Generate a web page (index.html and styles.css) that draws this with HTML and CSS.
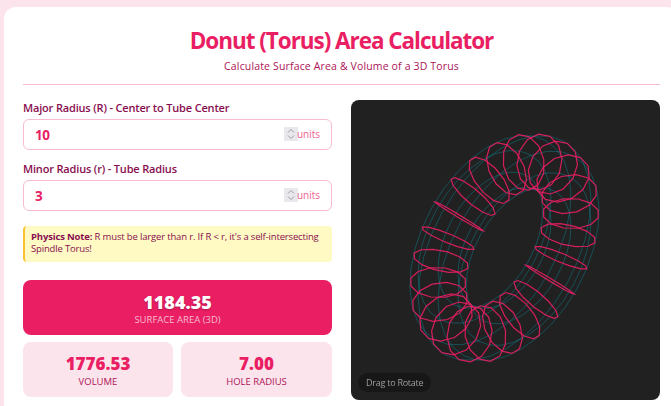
FILE: index.html
```html
<!DOCTYPE html>
<html lang="en">
<head>
<meta charset="utf-8">
<title>Donut (Torus) Area Calculator</title>
<link rel="stylesheet" href="styles.css">
</head>
<body>
<main class="card">
  <header class="header">
    <h1 class="title">Donut (Torus) Area Calculator</h1>
    <p class="subtitle">Calculate Surface Area &amp; Volume of a 3D Torus</p>
  </header>
  <div class="layout">
    <section class="controls">
      <div class="field">
        <label class="label" for="major">Major Radius (R) - Center to Tube Center</label>
        <div class="input-wrap">
          <input class="input" id="major" type="number" value="10">
          <svg class="spin" viewBox="0 0 14 14" aria-hidden="true"><path d="M4 5.500 7 2.500 10 5.500M4 8.500 7 11.500 10 8.500"/></svg>
          <span class="unit">units</span>
        </div>
      </div>
      <div class="field">
        <label class="label" for="minor">Minor Radius (r) - Tube Radius</label>
        <div class="input-wrap">
          <input class="input" id="minor" type="number" value="3">
          <svg class="spin" viewBox="0 0 14 14" aria-hidden="true"><path d="M4 5.500 7 2.500 10 5.500M4 8.500 7 11.500 10 8.500"/></svg>
          <span class="unit">units</span>
        </div>
      </div>
      <p class="note"><strong>Physics Note:</strong> R must be larger than r. If R &lt; r, it's a self-intersecting Spindle Torus!</p>
      <div class="result-main">
        <div class="main-value">1184.35</div>
        <div class="main-label">SURFACE AREA (3D)</div>
      </div>
      <div class="result-grid">
        <div class="result-small">
          <div class="small-value">1776.53</div>
          <div class="small-label">VOLUME</div>
        </div>
        <div class="result-small">
          <div class="small-value">7.00</div>
          <div class="small-label">HOLE RADIUS</div>
        </div>
      </div>
    </section>
    <section class="viewer">
      <canvas class="canvas" id="torus" width="309" height="300"></canvas>
      <span class="hint">Drag to Rotate</span>
    </section>
  </div>
</main>
<script src="torus.js"></script>
</body>
</html>
```
FILE: styles.css
```css
* { box-sizing: border-box; }
html, body { margin: 0; height: 100%; overflow: hidden; }
body {
  background: #fce4ec;
  padding: 7px 0 0 4px;
  font-family: "Open Sans", "Noto Sans", sans-serif;
  color: #880e4f;
}
.card {
  width: 675px;
  height: 420px;
  background: #fff;
  border-radius: 12px;
  padding: 19px;
}
.header {
  height: 59px;
  border-bottom: 1px solid #f8bbd0;
  text-align: center;
}
.title {
  margin: 0;
  font-size: 22.5px;
  line-height: 30px;
  font-weight: 700;
  letter-spacing: -1.05px;
  color: #e91e63;
}
.subtitle {
  margin: 3px 0 0;
  font-size: 10.5px;
  line-height: 15px;
  letter-spacing: .15px;
  color: #ad1457;
}
.layout {
  display: grid;
  grid-template-columns: 309px 309px;
  gap: 19px;
  margin-top: 15px;
}
.controls { display: flex; flex-direction: column; }
.field { margin-bottom: 11px; }
.label {
  display: block;
  font-size: 11px;
  line-height: 15px;
  font-weight: 600;
  letter-spacing: -.17px;
  margin-bottom: 4px;
}
.input-wrap { position: relative; }
.input {
  display: block;
  width: 100%;
  height: 31px;
  border: 1px solid #f8bbd0;
  border-radius: 6px;
  padding: 0 50px 0 11px;
  font-family: inherit;
  font-size: 13.5px;
  font-weight: 700;
  letter-spacing: -.4px;
  color: #e91e63;
  background: #fff;
  outline: none;
  appearance: textfield;
}
.input::-webkit-inner-spin-button { display: none; }
.spin {
  position: absolute;
  right: 34px;
  top: 8px;
  width: 14px;
  height: 14px;
  background: #e9e9ed;
}
.spin path { fill: none; stroke: #9a9aa2; stroke-width: 1; }
.unit {
  position: absolute;
  right: 12px;
  top: 8px;
  font-size: 10px;
  line-height: 14px;
  color: #f06292;
}
.note {
  margin: 4px 0 0;
  height: 36px;
  padding: 5px 4px 0 6px;
  background: #fff9c4;
  border-left: 2px solid #fbc02d;
  border-radius: 4px;
  font-size: 9.500px;
  line-height: 12px;
  letter-spacing: -.16px;
}
.result-main {
  margin-top: 18px;
  height: 55px;
  background: #e91e63;
  border-radius: 8px;
  text-align: center;
  color: #fff;
  padding-top: 11px;
}
.main-value {
  font-size: 18px;
  line-height: 22px;
  font-weight: 800;
  text-shadow: 0 1px 2px rgba(0, 0, 0, .25);
}
.main-label {
  font-size: 9.500px;
  line-height: 14px;
  color: #f8bbd0;
}
.result-grid {
  display: grid;
  grid-template-columns: 150px 151px;
  gap: 8px;
  margin-top: 7px;
}
.result-small {
  height: 55px;
  background: #fce4ec;
  border-radius: 8px;
  text-align: center;
  padding-top: 11px;
}
.small-value {
  font-size: 17px;
  line-height: 22px;
  font-weight: 800;
  color: #e91e63;
}
.small-label {
  font-size: 9.500px;
  line-height: 14px;
  color: #ad1457;
}
.viewer {
  position: relative;
  height: 300px;
  background: #212121;
  border-radius: 8px;
  overflow: hidden;
}
.canvas { display: block; }
.hint {
  position: absolute;
  left: 7px;
  bottom: 8px;
  height: 19px;
  padding: 0 8px;
  border-radius: 10px;
  background: rgba(0, 0, 0, .3);
  font-size: 9px;
  line-height: 19px;
  letter-spacing: -.25px;
  color: #9e9e9e;
}
```
FILE: torus.js
```js
(function () {
  var canvas = document.getElementById('torus');
  var ctx = canvas.getContext('2d');
  var R = 10, r = 3, scale = 9.4, cx = 153.5, cy = 148;
  var tilt = 54 * Math.PI / 180, roll = 119 * Math.PI / 180;
  var rings = 24, segs = 12, tubes = 8, steps = 32;

  function project(u, v) {
    var d = R + r * Math.cos(v);
    var x = d * Math.cos(u), y = d * Math.sin(u), z = r * Math.sin(v);
    var y2 = y * Math.cos(tilt) - z * Math.sin(tilt);
    var sx = x * Math.cos(roll) - y2 * Math.sin(roll);
    var sy = x * Math.sin(roll) + y2 * Math.cos(roll);
    return [cx + sx * scale, cy + sy * scale];
  }
  function line(count, at) {
    ctx.beginPath();
    for (var k = 0; k <= count; k++) {
      var p = at(k);
      if (k) ctx.lineTo(p[0], p[1]); else ctx.moveTo(p[0], p[1]);
    }
    ctx.stroke();
  }
  var T = Math.PI * 2;
  ctx.lineWidth = 1;
  ctx.strokeStyle = 'rgba(0, 188, 212, .3)';
  for (var j = 0; j < tubes; j++) {
    (function (v) {
      line(steps, function (k) { return project(k / steps * T, v); });
    })(j / tubes * T);
  }
  ctx.lineWidth = 1.2;
  ctx.strokeStyle = 'rgba(233, 30, 99, .9)';
  for (var i = 0; i < rings; i++) {
    (function (u) {
      line(segs, function (k) { return project(u, k / segs * T); });
    })(i / rings * T + 0.06);
  }
})();
```
